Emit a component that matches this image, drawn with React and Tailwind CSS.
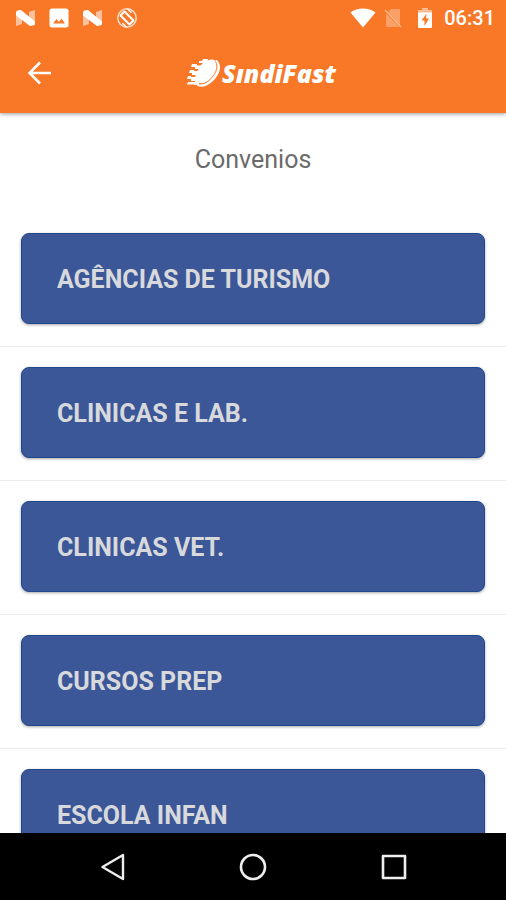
const convenios = [
  "AGÊNCIAS DE TURISMO",
  "CLINICAS E LAB.",
  "CLINICAS VET.",
  "CURSOS PREP",
  "ESCOLA INFAN",
];

function NougatIcon() {
  return (
    <svg width="21" height="18" viewBox="0 0 21 18" fill="#fff" aria-hidden="true">
      <path d="M1 4 7 8v7l-6 2zM14 3l6-2v13l-6-4z" opacity=".55" />
      <path d="M1 3.500Q1 2 2.500 1.600L6 1l14 11.500V15q0 1-1.200 1.200L15 17 1 6.500z" />
    </svg>
  );
}

function PictureIcon() {
  return (
    <svg width="20" height="20" viewBox="0 0 20 20" aria-hidden="true">
      <rect x="0.5" y="0.5" width="19" height="19" rx="2.5" fill="#fff" />
      <path d="M4 15.500 7.500 11 10 14 12.500 10.500 16 15.500z" fill="#f97827" />
    </svg>
  );
}

function RotationIcon() {
  return (
    <svg width="22" height="22" viewBox="0 0 22 22" fill="none" stroke="#fff" aria-hidden="true">
      <circle cx="11" cy="11" r="9.200" strokeWidth="1.500" opacity=".75" />
      <path d="M8.500 4.500 17.500 13.500 13.500 17.500 4.500 8.500z" strokeWidth="2" strokeLinejoin="round" />
      <path d="M11.500 1.800l4 4M10.500 20.200l-4-4" strokeWidth="1.500" />
    </svg>
  );
}

function WifiIcon() {
  return (
    <svg width="26" height="20" viewBox="0 0 26 20" fill="#fff" aria-hidden="true">
      <path d="M.5 4.500C7.500-1 18.500-1 25.500 4.500L13 19.500z" />
    </svg>
  );
}

function NoSimIcon() {
  return (
    <svg width="18" height="20" viewBox="0 0 18 20" aria-hidden="true">
      <path d="M7 1h8a1 1 0 0 1 1 1v15L4 4zM2 5.500 15 18.500a1 1 0 0 1-.5.500H3a1 1 0 0 1-1-1z" fill="#fff" opacity=".3" />
      <path d="M1 2 17 19" stroke="#fff" strokeWidth="1.500" opacity=".45" />
    </svg>
  );
}

function BatteryIcon() {
  return (
    <svg width="14" height="20" viewBox="0 0 14 20" aria-hidden="true">
      <path d="M4 0h6v2h4v3H0V2h4z" fill="#fff" opacity=".5" />
      <path d="M0 4.500h14V19a1 1 0 0 1-1 1H1a1 1 0 0 1-1-1z" fill="#fff" />
      <path d="M8.500 5.500 3.500 12.500h3V18l4.500-7.500H8z" fill="#f97827" />
    </svg>
  );
}

function BrandMark() {
  return (
    <svg width="36" height="30" viewBox="0 0 36 30" fill="none" aria-hidden="true">
      <ellipse cx="21" cy="13.500" rx="8.500" ry="13.500" transform="rotate(38 21 13.500)" fill="#fff" />
      <path
        d="M22 1h-5l-1 2h-3v2h4l-2 2.500H11V6H6L5 9h4v2h4l-1 2H8v-1H4l-1 3h3v2h4l-1 2H5v-1H2l-1 3h4v2h4v1H2l-1 2.500h5l6 .5 6-8z"
        fill="#fff"
      />
      <path
        d="M30.500 3.500c5 5 1 14-5.500 19.500-4 3.500-9 5-12.500 4"
        stroke="#fff"
        strokeWidth="2.600"
        strokeLinecap="round"
      />
      <path d="M29.500 3.500c3.500 6-.5 13.500-6 18.500-3.500 3-7 4.500-10.500 4" stroke="#f97827" strokeWidth="0.900" />
    </svg>
  );
}

function StatusBar() {
  return (
    <div className="flex h-9 items-center justify-between pr-[11px] pl-[15px]">
      <div className="flex items-center gap-[13px]">
        <NougatIcon />
        <PictureIcon />
        <NougatIcon />
        <RotationIcon />
      </div>
      <div className="flex items-center">
        <WifiIcon />
        <span className="ml-2"><NoSimIcon /></span>
        <span className="ml-4"><BatteryIcon /></span>
        <span className="ml-3 text-[20px] leading-6 font-medium text-white">06:31</span>
      </div>
    </div>
  );
}

function Header() {
  return (
    <header className="relative z-10 shrink-0 bg-[#f97827] shadow-[0_1px_4px_rgba(0,0,0,0.4)]">
      <StatusBar />
      <div className="grid h-[77px] grid-cols-[1fr_auto_1fr] items-center pb-1">
        <button type="button" aria-label="Voltar" className="ml-7 flex size-6 items-center justify-center">
          <svg width="24" height="24" viewBox="0 0 24 24" fill="none" stroke="#fff" strokeWidth="2.600" aria-hidden="true">
            <path d="M23 12H2M12 1.500 1.500 12 12 22.500" />
          </svg>
        </button>
        <div className="ml-4 flex items-center">
          <BrandMark />
          <span className="font-['Open_Sans',sans-serif] text-[25px] leading-7 font-extrabold text-white italic">SındiFast</span>
        </div>
      </div>
    </header>
  );
}

function NavigationBar() {
  return (
    <nav className="flex h-[67px] shrink-0 items-center justify-center gap-[112px] bg-black">
      <button type="button" aria-label="Voltar" className="flex size-7 items-center justify-center">
        <svg width="28" height="28" viewBox="0 0 28 28" fill="none" stroke="#eee" strokeWidth="2.400" strokeLinejoin="round" aria-hidden="true">
          <path d="M24 2v24L3.500 14z" />
        </svg>
      </button>
      <button type="button" aria-label="Início" className="flex size-7 items-center justify-center">
        <svg width="28" height="28" viewBox="0 0 28 28" fill="none" stroke="#eee" strokeWidth="2.600" aria-hidden="true">
          <circle cx="14" cy="14" r="12" />
        </svg>
      </button>
      <button type="button" aria-label="Recentes" className="flex size-7 items-center justify-center">
        <svg width="28" height="28" viewBox="0 0 28 28" fill="none" stroke="#eee" strokeWidth="2.600" strokeLinejoin="round" aria-hidden="true">
          <rect x="4" y="3" width="22" height="22" />
        </svg>
      </button>
    </nav>
  );
}

export default function App() {
  return (
    <div className="flex h-screen flex-col bg-white font-[Roboto,sans-serif]">
      <Header />
      <main className="min-h-0 flex-1 overflow-hidden">
        <h1 className="pt-8 pb-[38px] text-center text-[25px] leading-[30px] text-[#6b6b6b]">Convenios</h1>
        <ul>
          {convenios.map((name) => (
            <li key={name} className="border-b border-[#ececec] px-[21px] pt-5 pb-[22px]">
              <button
                type="button"
                className="flex h-[91px] w-full items-center rounded-[8px] border border-[#1f478c] bg-[#3b5797] px-[35px] pt-[2px] text-left text-[25px] leading-8 font-bold text-[#d8d9dd] shadow-[0_1px_3px_rgba(0,0,0,0.35)]"
              >
                {name}
              </button>
            </li>
          ))}
        </ul>
      </main>
      <NavigationBar />
    </div>
  );
}
